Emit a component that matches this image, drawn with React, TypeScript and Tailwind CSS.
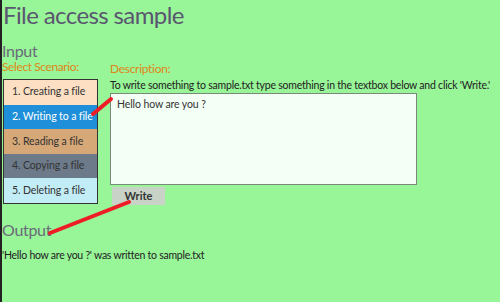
import React from "react";

const items = [
  { label: "1. Creating a file", cls: "bg-[#fde0c4] text-[#333]" },
  { label: "2. Writing to a file", cls: "bg-[#1e8fd8] text-white" },
  { label: "3. Reading a file", cls: "bg-[#d6a878] text-[#333]" },
  { label: "4. Copying a file", cls: "bg-[#6c7a8a] text-[#333]" },
  { label: "5. Deleting a file", cls: "bg-[#c2ecf6] text-[#333]" },
];

export default function App() {
  return (
    <div
      className="relative w-[500px] h-[302px] bg-[#98f598] border-l-2 border-[#222] overflow-hidden text-[#333]"
      style={{ fontFamily: '"Segoe UI", Lato, sans-serif' }}
    >
      <div className="pl-[1px] pt-[0px] text-[24px] tracking-[-0.6px] leading-[30px] text-[#5a5670]">File access sample</div>
      <div className="mt-[12px] pl-[0px] text-[16px] tracking-[-0.3px] leading-[18px] text-[#6a6a78]">Input</div>
      <div className="flex">
        <div className="w-[96px] shrink-0">
          <div className="text-[12px] tracking-[-0.4px] leading-[14px] text-[#e0861a] whitespace-nowrap">Select Scenario:</div>
          <div className="mt-[5px] ml-[1px] border border-[#333] text-[10.5px] tracking-[-0.1px]">
            {items.map((it) => (
              <div key={it.label} className={`h-[24.6px] flex items-center pl-[8px] whitespace-nowrap ${it.cls}`}>
                {it.label}
              </div>
            ))}
          </div>
        </div>
        <div className="ml-[12px] pt-[2px]">
          <div className="text-[12px] tracking-[-0.3px] leading-[14px] text-[#e0861a]">Description:</div>
          <div className="mt-[2px] text-[10.5px] tracking-[-0.22px] leading-[14px] whitespace-nowrap text-[#222]">
            To write something to sample.txt type something in the textbox below and click 'Write.'
          </div>
          <div className="mt-[1px] w-[307px] h-[92px] bg-[#f4fff6] border border-[#7a8a7a] px-[6px] py-[3px] text-[10.5px] tracking-[-0.1px] text-[#333]">
            Hello how are you ?
          </div>
          <div className="mt-[2px] ml-[2px] w-[53px] h-[18px] bg-[#c8d2c6] flex items-center justify-center text-[11px] font-bold text-[#333]">
            Write
          </div>
        </div>
      </div>
      <div className="mt-[15px] text-[16px] tracking-[-0.3px] leading-[20px] text-[#6a6a78]">Output</div>
      <div className="mt-[8px] text-[10.5px] tracking-[-0.25px] leading-[14px] text-[#222]">'Hello how are you ?' was written to sample.txt</div>
      <svg className="absolute left-0 top-0 pointer-events-none" width="500" height="302">
        <line x1="91" y1="114" x2="109" y2="99" stroke="#ee1c24" strokeWidth="4" strokeLinecap="round" />
        <line x1="48" y1="233" x2="127" y2="202" stroke="#ee1c24" strokeWidth="4" strokeLinecap="round" />
      </svg>
    </div>
  );
}
